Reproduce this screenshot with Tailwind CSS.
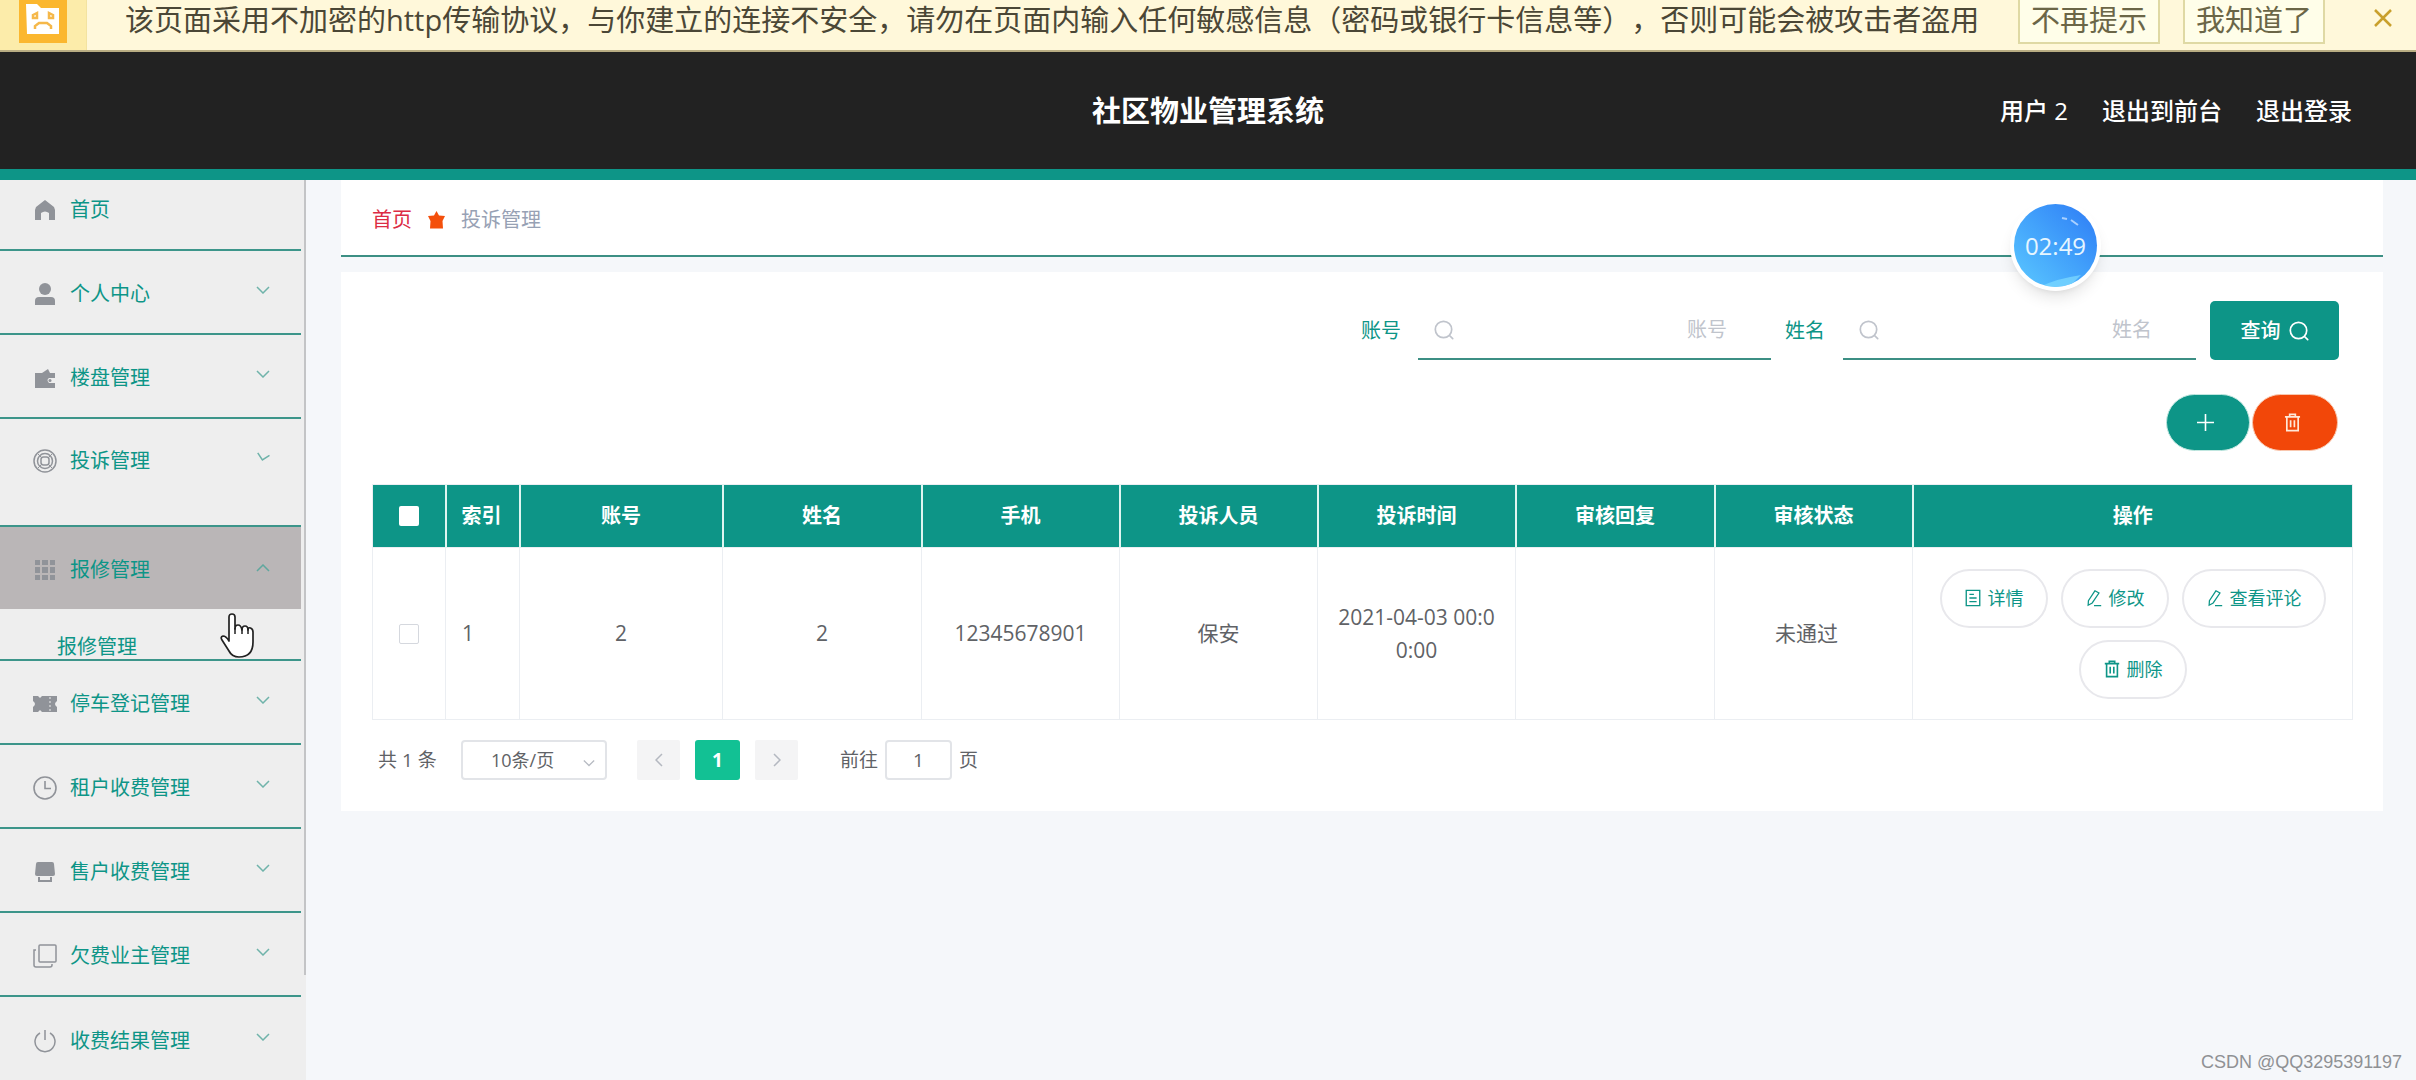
<!DOCTYPE html>
<html lang="zh-CN">
<head>
<meta charset="utf-8">
<title>社区物业管理系统</title>
<script src="https://cdn.jsdelivr.net/npm/@tailwindcss/browser@4"></script>
</head>
<body class="relative h-screen overflow-hidden flex flex-col bg-[#f5f7fa] font-['Open_Sans','Noto_Sans_CJK_SC',sans-serif] text-[20px] text-[#606266]">

<svg class="hidden" aria-hidden="true">
  <defs>
    <symbol id="search" viewBox="0 0 20 20"><g fill="none" stroke="currentColor" stroke-width="1.7" stroke-linecap="round"><circle cx="9.5" cy="9.5" r="8.2"/><path d="M15.5 15.5l3.2 3.2"/></g></symbol>
    <symbol id="chevron" viewBox="0 0 14 8"><path d="M1 1l6 6 6-6" fill="none" stroke="currentColor" stroke-width="1.5"/></symbol>
    <symbol id="trash" viewBox="0 0 18 20"><path d="M1 4h16M6 4V1.5h6V4M3 4v14.5h12V4M7 7.5v7.500M11 7.500v7.500" fill="none" stroke="currentColor" stroke-width="1.800"/></symbol>
    <symbol id="edit" viewBox="0 0 18 20"><path d="M10 2l4.500 2.500L7 15.500l-4.500 2.500L2.800 13zM9 18.500h8" fill="none" stroke="currentColor" stroke-width="1.400"/></symbol>
    <symbol id="doc" viewBox="0 0 18 20"><path d="M1.500 1.500h15v17h-15zM5 6h5M5 10h8M5 14h8" fill="none" stroke="currentColor" stroke-width="1.500"/></symbol>
  </defs>
</svg>

<section class="h-[52px] shrink-0 flex items-start bg-[#fff8da] border-b-2 border-[#b9ad83] text-[29px] leading-[40px] text-[#4b4736] whitespace-nowrap">
  <div class="w-[87px] h-[50px] shrink-0 bg-[#fcecaa] border-r border-[#f3e3a0] flex justify-center">
    <div class="w-[48px] h-[43px] bg-[#fbb72f] flex justify-center">
      <svg class="w-[34px] h-[34px]" viewBox="0 0 34 34"><path d="M0 4h11l4 4h18v26H1z" fill="#fff"/><path d="M7 15l4-2v5H7zM27 15l-4-2v5h4zM9 29v-3l4-3h8l4 3v3" fill="none" stroke="#f5b84a" stroke-width="2.500"/></svg>
    </div>
  </div>
  <p class="ml-[38px] flex-1 [text-spacing-trim:space-all]">该页面采用不加密的http传输协议，与你建立的连接不安全，请勿在页面内输入任何敏感信息（密码或银行卡信息等），否则可能会被攻击者盗用</p>
  <button class="w-[142px] h-[44px] pb-1 leading-[40px] bg-[#fffee9] border-2 border-t-0 border-[#dfd9a4] text-[#6b6647]">不再提示</button>
  <button class="ml-[23px] w-[142px] h-[44px] pb-1 leading-[40px] bg-[#fffee9] border-2 border-t-0 border-[#dfd9a4] text-[#6b6647]">我知道了</button>
  <button class="ml-[48px] mr-[23px] h-[36px]" aria-label="关闭"><svg class="w-[20px] h-[20px]" viewBox="0 0 20 20"><path d="M2 2l16 16M18 2L2 18" stroke="#c9a02c" stroke-width="2.500"/></svg></button>
</section>

<header class="h-[128px] shrink-0 grid grid-cols-[1fr_auto_1fr] items-center bg-[#222] border-b-[11px] border-[#0d9587] text-white">
  <h1 class="col-start-2 text-[29px] font-bold">社区物业管理系统</h1>
  <nav class="flex justify-end gap-[34px] pr-[64px] text-[24px] font-medium">
    <span>用户 2</span><a href="#">退出到前台</a><a href="#">退出登录</a>
  </nav>
</header>

<div class="flex-1 min-h-0 flex">
  <aside class="relative w-[306px] shrink-0 overflow-hidden bg-[#eee] text-[#0d9587]">
    <ul class="w-[301px]">
      <li class="h-[71px] border-b-2 border-[#3c958a]"><a href="#" class="flex items-center h-[60px] pl-[34px]">
        <svg class="w-[22px] h-[22px] mr-[14px] text-[#909399]" viewBox="0 0 22 22"><path d="M11 1l9 7 1 3v10h-6v-7q-4-3-8 0v7H1V11l1-3z" fill="currentColor"/></svg>首页</a></li>
      <li class="h-[84px] border-b-2 border-[#3c958a]"><a href="#" class="flex items-center h-full pt-1 pl-[34px] pr-[31px]">
        <svg class="w-[22px] h-[22px] mr-[14px] text-[#909399]" viewBox="0 0 22 22"><circle cx="11" cy="6" r="6" fill="currentColor"/><path d="M1 22v-4q0-4 4-4h12q4 0 4 4v4z" fill="currentColor"/></svg>个人中心
        <svg class="w-[14px] h-[8px] mb-2 ml-auto text-[#6fb3aa]"><use href="#chevron"/></svg></a></li>
      <li class="h-[84px] border-b-2 border-[#3c958a]"><a href="#" class="flex items-center h-full pt-1 pl-[34px] pr-[31px]">
        <svg class="w-[22px] h-[22px] mr-[14px] text-[#909399]" viewBox="0 0 22 22"><path d="M1 6h7l6-4 2 4h5v5h-6q-3 2 0 5h6v5H1z" fill="currentColor"/><circle cx="16" cy="13.500" r="1.500" fill="currentColor"/></svg>楼盘管理
        <svg class="w-[14px] h-[8px] mb-2 ml-auto text-[#6fb3aa]"><use href="#chevron"/></svg></a></li>
      <li class="h-[108px] border-b-2 border-[#3c958a]"><a href="#" class="flex items-center h-[84px] pl-[33px] pr-[31px]">
        <svg class="w-[24px] h-[24px] mr-[13px] text-[#909399]" viewBox="0 0 24 24" fill="none" stroke="currentColor" stroke-width="1.500"><circle cx="12" cy="12" r="11"/><circle cx="12" cy="12" r="7.500"/><rect x="8" y="8" width="8" height="8" rx="2.500"/><path d="M5 5l3.500 3.500M19 5l-3.500 3.500M5 19l3.500-3.500M19 19l-3.500-3.500" stroke-width="1"/></svg>投诉管理
        <svg class="w-[14px] h-[8px] mb-2 ml-auto text-[#6fb3aa] rotate-12"><use href="#chevron"/></svg></a></li>
      <li class="h-[134px] border-b-2 border-[#3c958a] overflow-hidden"><a href="#" class="flex items-center h-[82px] pt-1 pl-[34px] pr-[31px] bg-[#bab6b7]">
        <svg class="w-[22px] h-[22px] mr-[14px] text-[#909399]" viewBox="0 0 22 22" fill="currentColor"><path d="M1 1h5v5H1zM8 1h6v5H8zM16 1h5v5h-5zM1 8h5v6H1zM8 8h6v6H8zM16 8h5v6h-5zM1 16h5v5H1zM8 16h6v5H8zM16 16h5v5h-5z"/></svg>报修管理
        <svg class="w-[14px] h-[8px] mb-1 ml-auto text-[#5fa79e] rotate-180"><use href="#chevron"/></svg></a>
        <a href="#" class="flex items-end h-[50px] pl-[57px] leading-[24px]">报修管理</a></li>
      <li class="h-[84px] border-b-2 border-[#3c958a]"><a href="#" class="flex items-center h-full pt-1 pl-[33px] pr-[31px]">
        <svg class="w-[24px] h-[18px] mr-[13px] text-[#909399]" viewBox="0 0 24 18"><path d="M0 1h5l2 2 2-2h15v5q-4 3 0 6v5H9l-2-2-2 2H0v-5q4-3 0-6z" fill="currentColor"/><path d="M17 2v14" stroke="#eee" stroke-dasharray="2 2"/></svg>停车登记管理
        <svg class="w-[14px] h-[8px] mb-2 ml-auto text-[#6fb3aa]"><use href="#chevron"/></svg></a></li>
      <li class="h-[84px] border-b-2 border-[#3c958a]"><a href="#" class="flex items-center h-full pt-1 pl-[33px] pr-[31px]">
        <svg class="w-[24px] h-[24px] mr-[13px] text-[#909399]" viewBox="0 0 24 24" fill="none" stroke="currentColor" stroke-width="1.600"><circle cx="12" cy="12" r="11"/><path d="M12 5v7.500h6"/></svg>租户收费管理
        <svg class="w-[14px] h-[8px] mb-2 ml-auto text-[#6fb3aa]"><use href="#chevron"/></svg></a></li>
      <li class="h-[84px] border-b-2 border-[#3c958a]"><a href="#" class="flex items-center h-full pt-1 pl-[34px] pr-[31px]">
        <svg class="w-[22px] h-[22px] mr-[14px] text-[#909399]" viewBox="0 0 22 22"><path d="M4 1h14q2 0 2 2l1 10q0 2-2 2H3q-2 0-2-2L2 3q0-2 2-2z" fill="currentColor"/><path d="M5 16v4h12v-4" fill="none" stroke="currentColor" stroke-width="2"/></svg>售户收费管理
        <svg class="w-[14px] h-[8px] mb-2 ml-auto text-[#6fb3aa]"><use href="#chevron"/></svg></a></li>
      <li class="h-[84px] border-b-2 border-[#3c958a]"><a href="#" class="flex items-center h-full pt-1 pl-[33px] pr-[31px]">
        <svg class="w-[24px] h-[24px] mr-[13px] text-[#909399]" viewBox="0 0 24 24" fill="none" stroke="currentColor" stroke-width="1.500"><rect x="6" y="1" width="17" height="17" rx="1"/><path d="M3 6H1v15q0 2 2 2h14q2 0 2-2v-1"/></svg>欠费业主管理
        <svg class="w-[14px] h-[8px] mb-2 ml-auto text-[#6fb3aa]"><use href="#chevron"/></svg></a></li>
      <li class="h-[84px]"><a href="#" class="flex items-center h-full pt-1 pl-[34px] pr-[31px]">
        <svg class="w-[22px] h-[24px] mr-[14px] text-[#909399]" viewBox="0 0 22 24" fill="none" stroke="currentColor" stroke-width="1.500"><path d="M6 4a10 10 0 1 0 10 0M11 1v10"/></svg>收费结果管理
        <svg class="w-[14px] h-[8px] mb-2 ml-auto text-[#6fb3aa]"><use href="#chevron"/></svg></a></li>
    </ul>
    <div class="absolute right-0 top-0 w-[2px] h-[795px] bg-[#c3c4c6]"></div>
  </aside>

  <main class="flex-1 min-w-0 pl-[35px] pr-[33px]">
    <nav class="h-[77px] flex items-center gap-[16px] pt-[5px] pl-[31px] bg-white border-b-2 border-[#3c8f84]">
      <a href="#" class="text-[#dc2c44]">首页</a>
      <svg class="w-[17px] h-[18px]" viewBox="0 0 17 18"><path d="M8.500 0l2.500 4.500 6 .5-2.500 5 .5 7.500H2L2.500 10 0 5l6-.5z" fill="#f4500c"/></svg>
      <span class="text-[#97a1b4]">投诉管理</span>
    </nav>

    <section class="mt-[15px] bg-white pl-[31px] pr-[31px] pt-[29px] pb-[31px]">
      <form class="flex justify-end items-center pr-[13px]">
        <label for="account" class="mr-[17px] text-[#0d9587]">账号</label>
        <div class="w-[353px] h-[59px] flex items-center pl-[16px] pr-[44px] border-b-2 border-[#3c8f84] text-[#c0c4cc]">
          <svg class="w-[20px] h-[20px]"><use href="#search"/></svg>
          <input id="account" type="text" placeholder="账号" class="flex-1 min-w-0 text-right outline-none placeholder:text-[#c0c4cc]">
        </div>
        <label for="name" class="ml-[14px] mr-[18px] text-[#0d9587]">姓名</label>
        <div class="w-[353px] h-[59px] flex items-center pl-[16px] pr-[44px] border-b-2 border-[#3c8f84] text-[#c0c4cc]">
          <svg class="w-[20px] h-[20px]"><use href="#search"/></svg>
          <input id="name" type="text" placeholder="姓名" class="flex-1 min-w-0 text-right outline-none placeholder:text-[#c0c4cc]">
        </div>
        <button type="button" class="ml-[14px] w-[129px] h-[59px] flex items-center justify-center gap-[8px] rounded-[5px] bg-[#0d9587] text-white font-medium">查询<svg class="w-[20px] h-[20px]"><use href="#search"/></svg></button>
      </form>

      <div class="mt-[34px] flex justify-end gap-[2px] pr-[14px]">
        <button class="w-[84px] h-[57px] pr-[6px] flex items-center justify-center rounded-full bg-[#0d9587] border border-[#bfe6df]" aria-label="新增"><svg class="w-[17px] h-[17px]" viewBox="0 0 17 17"><path d="M8.500 0v17M0 8.500h17" stroke="#fff" stroke-width="1.600"/></svg></button>
        <button class="w-[86px] h-[57px] pr-[6px] flex items-center justify-center rounded-full bg-[#f24709] border border-[#f9c7ae] text-[#ffe8d8]" aria-label="批量删除"><svg class="w-[17px] h-[19px]"><use href="#trash"/></svg></button>
      </div>

      <table class="mt-[33px] w-full table-fixed border-collapse border border-[#ebeef2]">
        <colgroup><col class="w-[73px]"><col class="w-[74px]"><col class="w-[203px]"><col class="w-[199px]"><col class="w-[198px]"><col class="w-[198px]"><col class="w-[198px]"><col class="w-[199px]"><col class="w-[198px]"><col class="w-[440px]"></colgroup>
        <thead>
          <tr class="h-[63px] bg-[#0d9587] text-white">
            <th class="border-r-2 border-[#dff5f1]"><input type="checkbox" aria-label="全选" class="appearance-none block mx-auto w-[20px] h-[20px] rounded-[2px] bg-white"></th>
            <th class="border-r-2 border-[#dff5f1] text-left pl-[15px]">索引</th>
            <th class="border-r-2 border-[#dff5f1]">账号</th>
            <th class="border-r-2 border-[#dff5f1]">姓名</th>
            <th class="border-r-2 border-[#dff5f1]">手机</th>
            <th class="border-r-2 border-[#dff5f1]">投诉人员</th>
            <th class="border-r-2 border-[#dff5f1]">投诉时间</th>
            <th class="border-r-2 border-[#dff5f1]">审核回复</th>
            <th class="border-r-2 border-[#dff5f1]">审核状态</th>
            <th>操作</th>
          </tr>
        </thead>
        <tbody>
          <tr class="h-[172px] text-center text-[21px] leading-[33px]">
            <td class="border border-[#ebeef2]"><input type="checkbox" aria-label="选择第 1 行" class="appearance-none block mx-auto w-[20px] h-[20px] rounded-[2px] border border-[#d5d8de]"></td>
            <td class="border border-[#ebeef2] text-left pl-[16px]">1</td>
            <td class="border border-[#ebeef2]">2</td>
            <td class="border border-[#ebeef2]">2</td>
            <td class="border border-[#ebeef2]">12345678901</td>
            <td class="border border-[#ebeef2]">保安</td>
            <td class="border border-[#ebeef2] px-[16px] break-all">2021-04-03 00:00:00</td>
            <td class="border border-[#ebeef2]"></td>
            <td class="border border-[#ebeef2] pr-[14px]">未通过</td>
            <td class="border border-[#ebeef2]">
              <div class="flex flex-wrap justify-center gap-x-[13px] gap-y-[12px] px-[20px] text-[18px] text-[#0d9587]">
                <button class="h-[59px] px-[22px] flex items-center gap-[6px] rounded-full border-2 border-[#e8e8ec]"><svg class="w-[18px] h-[18px]"><use href="#doc"/></svg>详情</button>
                <button class="h-[59px] px-[22px] flex items-center gap-[6px] rounded-full border-2 border-[#e8e8ec]"><svg class="w-[18px] h-[18px]"><use href="#edit"/></svg>修改</button>
                <button class="h-[59px] px-[22px] flex items-center gap-[6px] rounded-full border-2 border-[#e8e8ec]"><svg class="w-[18px] h-[18px]"><use href="#edit"/></svg>查看评论</button>
                <button class="h-[59px] px-[22px] flex items-center gap-[6px] rounded-full border-2 border-[#e8e8ec]"><svg class="w-[18px] h-[18px]"><use href="#trash"/></svg>删除</button>
              </div>
            </td>
          </tr>
        </tbody>
      </table>

      <div class="mt-[20px] h-[40px] flex items-center pl-[6px] text-[19px]">
        <span class="mr-[23px] w-[60px] whitespace-nowrap">共 1 条</span>
        <div class="relative w-[146px] h-[40px]">
          <select aria-label="每页条数" class="appearance-none w-full h-full pl-[28px] rounded-[4px] border-2 border-[#e2e4e8] bg-white text-[18px]"><option>10条/页</option></select>
          <svg class="absolute right-[12px] top-[19px] w-[12px] h-[8px] text-[#b6bac2] pointer-events-none"><use href="#chevron"/></svg>
        </div>
        <button class="ml-[30px] w-[43px] h-[40px] flex items-center justify-center rounded-[2px] bg-[#f4f4f5] text-[#b4b8c0]" aria-label="上一页"><svg class="w-[14px] h-[8px] rotate-90"><use href="#chevron"/></svg></button>
        <button class="ml-[15px] w-[45px] h-[40px] rounded-[3px] bg-[#12c194] text-white font-bold">1</button>
        <button class="ml-[15px] w-[43px] h-[40px] flex items-center justify-center rounded-[2px] bg-[#f4f4f5] text-[#b4b8c0]" aria-label="下一页"><svg class="w-[14px] h-[8px] -rotate-90"><use href="#chevron"/></svg></button>
        <label for="page" class="ml-[42px] mr-[7px]">前往</label>
        <input id="page" type="text" value="1" class="w-[67px] h-[40px] text-center rounded-[4px] border-2 border-[#e2e4e8]">
        <span class="ml-[7px]">页</span>
      </div>
    </section>
  </main>
</div>

<div class="absolute right-[315px] top-[200px] w-[91px] h-[91px] rounded-full bg-white p-[4px] shadow-lg">
  <div class="relative w-full h-full rounded-full overflow-hidden bg-linear-to-tr from-[#5cc8ff] to-[#2f7af5] flex items-center justify-center text-[24px] text-[#e6f6ff]">
    <svg class="absolute inset-0 w-full h-full" viewBox="0 0 83 83"><path d="M25 83q20-9 42-12l-12 12z" fill="#7fdcff" opacity=".7"/><path d="M48 14l5 1M57 16l7 5" stroke="#a9d0ff" stroke-width="2"/></svg>
    <span class="relative">02:49</span>
  </div>
</div>

<svg class="absolute left-[220px] top-[613px] w-[34px] h-[45px]" viewBox="0 0 34 45"><path d="M9 4q0-3 3-3t3 3v12q0-4 3-4t4 5q0-4 3-4t3 4q0-3 2.500-2t2.500 4v10q0 15-14 15-7 0-10-6L2 27q-2-3 1-4 3 0 6 5z" fill="#fff" stroke="#222" stroke-width="1.700" stroke-linejoin="round"/><path d="M15 15v6M22 15v6M28 15v6" stroke="#222" stroke-width="1.500"/></svg>

<p class="absolute right-[14px] bottom-[6px] font-['Liberation_Sans',sans-serif] text-[18px] leading-[24px] text-[#8f9194]">CSDN @QQ3295391197</p>
</body>
</html>
